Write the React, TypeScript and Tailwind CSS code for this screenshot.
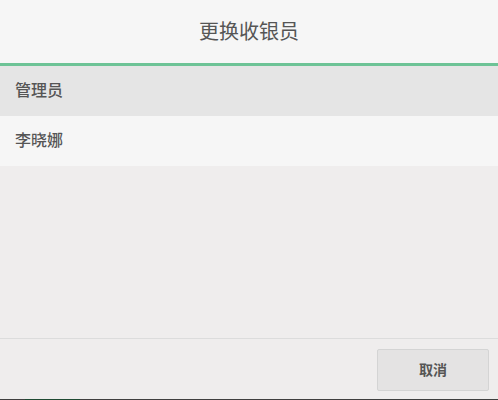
const font = "font-['Liberation_Sans','Noto_Sans_CJK_SC',sans-serif]";

const cashiers = [
  { name: "管理员", active: true },
  { name: "李晓娜", active: false },
];

export default function App() {
  return (
    <div className={`w-[498px] h-[400px] flex flex-col bg-[#efeded] text-[#555] ${font}`}>
      <div className="h-[63px] flex items-center justify-center bg-[#f6f6f6] text-[20px]">
        更换收银员
      </div>
      <div className="h-[3px] bg-[#6dc396]" />

      <div className="flex flex-col">
        {cashiers.map((c) => (
          <div
            key={c.name}
            className={`h-[50px] flex items-center pl-[15px] text-[16px] font-medium ${
              c.active ? "bg-[#e5e5e5]" : "bg-[#f6f6f6]"
            }`}
          >
            {c.name}
          </div>
        ))}
      </div>

      <div className="flex-1" />

      <div className="h-[61px] border-t border-[#dcdcdc] flex justify-end items-start pt-[10px] pr-[9px]">
        <button className="w-[112px] h-[42px] rounded-[2px] border border-[#d4d4d4] bg-[#e4e3e3] text-[14px] font-bold text-[#555]">
          取消
        </button>
      </div>

      <div className="h-[1px] flex bg-[#3f3f3f]">
        <div className="w-[25px]" />
        <div className="w-[55px] bg-[#1f4a33]" />
      </div>
    </div>
  );
}
